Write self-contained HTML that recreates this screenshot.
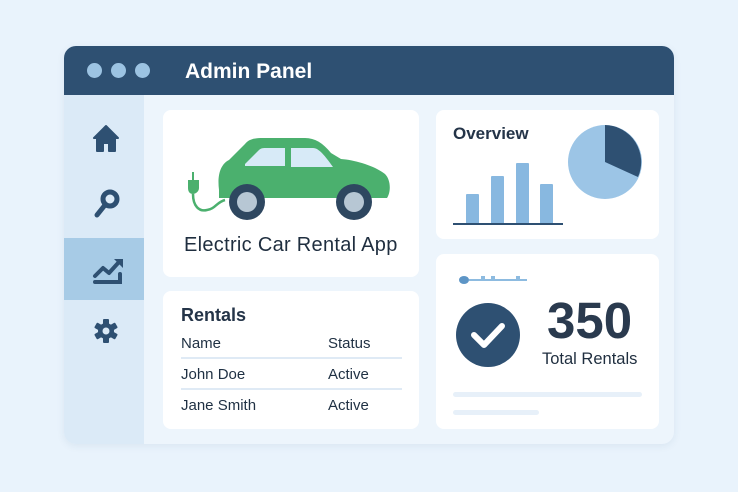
<!DOCTYPE html>
<html><head><style>
*{margin:0;padding:0;box-sizing:border-box}
body{width:738px;height:492px;background:#e9f3fc;font-family:"Liberation Sans",sans-serif;position:relative;overflow:hidden;color:#1f3043}
.win{position:absolute;left:64px;top:46px;width:610px;height:398px;background:#edf5fc;border-radius:12px;overflow:hidden;box-shadow:0 2px 8px rgba(40,80,120,.08)}
.hdr{position:absolute;left:0;top:0;width:610px;height:49px;background:#2e5072}
.dot{position:absolute;top:17px;width:15px;height:15px;border-radius:50%;background:#9cc3e2}
.title{position:absolute;left:121px;top:14px;color:#fff;font-size:21px;font-weight:bold}
.side{position:absolute;left:0;top:49px;width:80px;height:349px;background:#dbeaf7}
.act{position:absolute;left:0;top:143px;width:80px;height:62px;background:#a7cbe6}
.card{position:absolute;background:#fff;border-radius:8px}
.t{position:absolute;white-space:nowrap}
</style></head><body>
<div class="win">
 <div class="hdr">
  <div class="dot" style="left:23px"></div><div class="dot" style="left:47px"></div><div class="dot" style="left:71px"></div>
  <div class="title">Admin Panel</div>
 </div>
 <div class="side"><div class="act"></div>
  <svg width="80" height="349" style="position:absolute;left:0;top:0">
   <path d="M42 31 L30 43 H33 V56 H39 V48 H45 V56 H51 V43 H54 Z" fill="#2e5072" stroke="#2e5072" stroke-width="2" stroke-linejoin="round"/>
   <circle cx="46" cy="104" r="7" fill="none" stroke="#2e5072" stroke-width="5"/>
   <path d="M41 110 L33 120" stroke="#2e5072" stroke-width="5" stroke-linecap="round"/>
   <path d="M31 181 L39 173 L45 178 L55 167" fill="none" stroke="#2e5072" stroke-width="4" stroke-linecap="round" stroke-linejoin="round"/>
   <path d="M50 164 H59 V173 Z" fill="#2e5072"/>
   <path d="M31 187 H56 V179" fill="none" stroke="#2e5072" stroke-width="4" stroke-linecap="round"/>
   <g transform="translate(42 236)" fill="#2e5072">
    <circle r="8"/>
    <rect x="-3" y="-12" width="6" height="24" rx="1"/>
    <rect x="-3" y="-12" width="6" height="24" rx="1" transform="rotate(60)"/>
    <rect x="-3" y="-12" width="6" height="24" rx="1" transform="rotate(120)"/>
    <circle r="3.5" fill="#dbeaf7"/>
   </g>
  </svg>
 </div>
 <div class="card" style="left:99px;top:64px;width:256px;height:167px">
  <svg width="256" height="120" style="position:absolute;left:0;top:0">
   <path d="M56 80 C54 64 58 54 66 50 L82 34 C86 29 92 28 100 28 L142 28 C152 28 160 33 168 43 L178 49 C192 50 212 56 222 64 C228 70 228 82 224 88 L56 88 Z" fill="#4bb06e"/>
   <path d="M82 54 L96 40 C98 38 100 38 104 38 L122 38 L122 56 L82 56 Z" fill="#d7eaf7"/>
   <path d="M128 38 L150 38 C156 38 162 46 170 57 L128 57 Z" fill="#d7eaf7"/>
   <circle cx="84" cy="92" r="18" fill="#2e4760"/><circle cx="84" cy="92" r="10" fill="#b7c7d4"/>
   <circle cx="191" cy="92" r="18" fill="#2e4760"/><circle cx="191" cy="92" r="10" fill="#b7c7d4"/>
   <path d="M25 70 H36 V78 C36 82 32 84 30 84 C27 84 25 82 25 78 Z" fill="#4bb06e"/>
   <path d="M30 62 V70" stroke="#4bb06e" stroke-width="2"/>
   <path d="M30 84 C30 96 36 102 44 100 C52 99 54 92 62 90" fill="none" stroke="#4bb06e" stroke-width="2.5"/>
  </svg>
  <div class="t" style="left:21px;top:124px;font-size:20px;letter-spacing:0.3px;color:#1f2e3f">Electric Car Rental App</div>
 </div>
 <div class="card" style="left:99px;top:245px;width:256px;height:138px">
  <div class="t" style="left:18px;top:14px;font-size:18px;font-weight:bold;color:#243448">Rentals</div>
  <div class="t" style="left:18px;top:44px;font-size:15px">Name</div>
  <div class="t" style="left:165px;top:44px;font-size:15px">Status</div>
  <div style="position:absolute;left:18px;top:66px;width:221px;height:2px;background:#dfeaf5"></div>
  <div class="t" style="left:18px;top:75px;font-size:15px">John Doe</div>
  <div class="t" style="left:165px;top:75px;font-size:15px">Active</div>
  <div style="position:absolute;left:18px;top:97px;width:221px;height:2px;background:#dfeaf5"></div>
  <div class="t" style="left:18px;top:106px;font-size:15px">Jane Smith</div>
  <div class="t" style="left:165px;top:106px;font-size:15px">Active</div>
 </div>
 <div class="card" style="left:372px;top:64px;width:223px;height:129px">
  <div class="t" style="left:17px;top:14px;font-size:17px;font-weight:bold;color:#243448">Overview</div>
  <svg width="223" height="129" style="position:absolute;left:0;top:0">
   <rect x="30" y="84" width="13" height="30" rx="1" fill="#88b8e0"/>
   <rect x="55" y="66" width="13" height="48" rx="1" fill="#88b8e0"/>
   <rect x="80" y="53" width="13" height="61" rx="1" fill="#88b8e0"/>
   <rect x="104" y="74" width="13" height="40" rx="1" fill="#88b8e0"/>
   <rect x="17" y="113" width="110" height="2" fill="#2e5072"/>
   <circle cx="169" cy="52" r="37" fill="#9cc5e6"/>
   <path d="M169 52 L169 15 A37 37 0 0 1 202 67 Z" fill="#2e5072"/>
  </svg>
 </div>
 <div class="card" style="left:372px;top:208px;width:223px;height:175px">
  <svg width="223" height="175" style="position:absolute;left:0;top:0">
   <ellipse cx="28" cy="26" rx="5" ry="4" fill="#5d95c6"/>
   <rect x="33" y="25" width="58" height="2" fill="#8dbbe0"/>
   <rect x="45" y="22" width="4" height="4" fill="#8dbbe0"/><rect x="55" y="22" width="4" height="4" fill="#8dbbe0"/><rect x="80" y="22" width="4" height="4" fill="#8dbbe0"/>
   <circle cx="52" cy="81" r="32" fill="#2e5072"/>
   <path d="M38 81 L48 91 L66 72" fill="none" stroke="#fff" stroke-width="6" stroke-linecap="round" stroke-linejoin="round"/>
   <rect x="17" y="138" width="189" height="5" rx="2.5" fill="#e7f0f9"/>
   <rect x="17" y="156" width="86" height="5" rx="2.5" fill="#e7f0f9"/>
  </svg>
  <div class="t" style="left:111px;top:37px;font-size:51px;font-weight:bold;color:#2a3a4e">350</div>
  <div class="t" style="left:106px;top:96px;font-size:16.5px;color:#1f2e3f">Total Rentals</div>
 </div>
</div>
</body></html>
